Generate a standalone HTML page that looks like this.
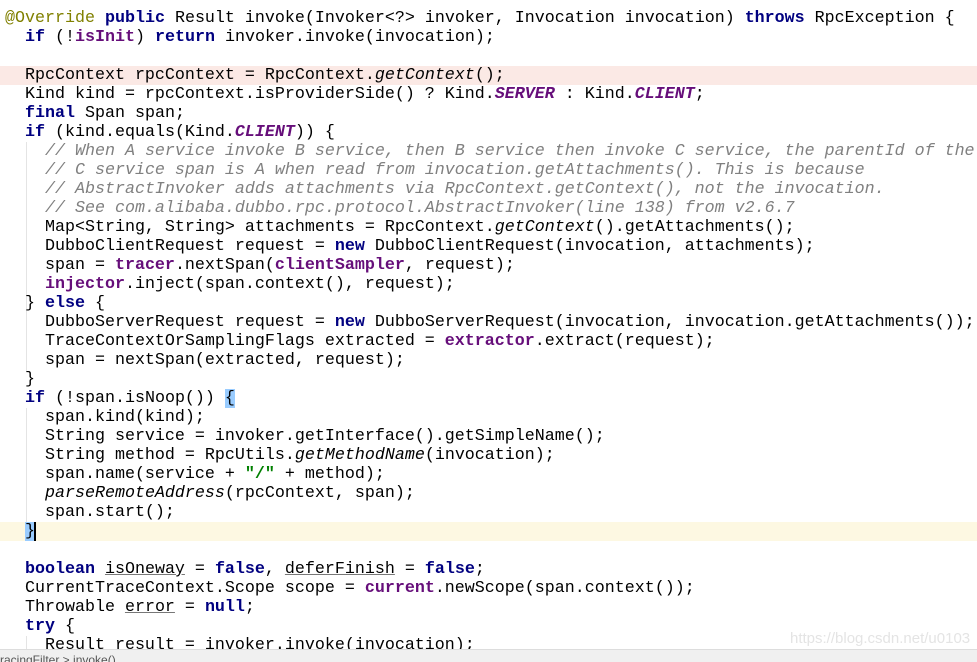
<!DOCTYPE html>
<html><head><meta charset="utf-8"><style>
body{margin:0;width:977px;height:661px;overflow:hidden;background:#fff;position:relative}
#code{position:absolute;left:0;top:9px;font-family:"Liberation Mono",monospace;font-size:16.67px;line-height:19px;color:#000}
.l{height:19px;width:1000px;padding-left:5px;white-space:pre;overflow:hidden}
.k{color:#000080;font-weight:bold}
.f{color:#660e7a;font-weight:bold}
.fi{color:#660e7a;font-style:italic;font-weight:bold}
.i{font-style:italic}
.c{color:#808080;font-style:italic}
.s{color:#008000;font-weight:bold}
.a{color:#808000}
.u{text-decoration:underline;text-decoration-color:#777}
.hl{background:#fbe9e5}
.cur{background:#fdf8e2}
.br{background:#99ccff}
#bar{position:absolute;left:0;top:649px;width:977px;height:12px;background:#f0f0f0;border-top:1px solid #ddd;font-family:"Liberation Sans",sans-serif;font-size:12px;color:#555;line-height:20px;overflow:hidden}
#wm{position:absolute;left:790px;top:630px;font-family:"Liberation Sans",sans-serif;font-size:15px;color:#e4e4e4}
.g{position:absolute;width:1px;background:#e4e4e4}
</style></head><body>
<div class="g" style="left:26px;top:142px;height:229px"></div>
<div class="g" style="left:26px;top:408px;height:115px"></div>
<div class="g" style="left:26px;top:636px;height:14px"></div>
<div id="code"><div class="l"><span class="a">@Override</span> <span class="k">public</span> Result invoke(Invoker&lt;?&gt; invoker, Invocation invocation) <span class="k">throws</span> RpcException {</div><div class="l">  <span class="k">if</span> (!<span class="f">isInit</span>) <span class="k">return</span> invoker.invoke(invocation);</div><div class="l"> </div><div class="l hl">  RpcContext rpcContext = RpcContext.<span class="i">getContext</span>();</div><div class="l">  Kind kind = rpcContext.isProviderSide() ? Kind.<span class="fi">SERVER</span> : Kind.<span class="fi">CLIENT</span>;</div><div class="l">  <span class="k">final</span> Span span;</div><div class="l">  <span class="k">if</span> (kind.equals(Kind.<span class="fi">CLIENT</span>)) {</div><div class="l">    <span class="c">// When A service invoke B service, then B service then invoke C service, the parentId of the</span></div><div class="l">    <span class="c">// C service span is A when read from invocation.getAttachments(). This is because</span></div><div class="l">    <span class="c">// AbstractInvoker adds attachments via RpcContext.getContext(), not the invocation.</span></div><div class="l">    <span class="c">// See com.alibaba.dubbo.rpc.protocol.AbstractInvoker(line 138) from v2.6.7</span></div><div class="l">    Map&lt;String, String&gt; attachments = RpcContext.<span class="i">getContext</span>().getAttachments();</div><div class="l">    DubboClientRequest request = <span class="k">new</span> DubboClientRequest(invocation, attachments);</div><div class="l">    span = <span class="f">tracer</span>.nextSpan(<span class="f">clientSampler</span>, request);</div><div class="l">    <span class="f">injector</span>.inject(span.context(), request);</div><div class="l">  } <span class="k">else</span> {</div><div class="l">    DubboServerRequest request = <span class="k">new</span> DubboServerRequest(invocation, invocation.getAttachments());</div><div class="l">    TraceContextOrSamplingFlags extracted = <span class="f">extractor</span>.extract(request);</div><div class="l">    span = nextSpan(extracted, request);</div><div class="l">  }</div><div class="l">  <span class="k">if</span> (!span.isNoop()) <span class="br">{</span></div><div class="l">    span.kind(kind);</div><div class="l">    String service = invoker.getInterface().getSimpleName();</div><div class="l">    String method = RpcUtils.<span class="i">getMethodName</span>(invocation);</div><div class="l">    span.name(service + <span class="s">"/"</span> + method);</div><div class="l">    <span class="i">parseRemoteAddress</span>(rpcContext, span);</div><div class="l">    span.start();</div><div class="l cur">  <span class="br">}</span><span style="border-left:2px solid #000;margin-left:-1px"></span></div><div class="l"> </div><div class="l">  <span class="k">boolean</span> <span class="u">isOneway</span> = <span class="k">false</span>, <span class="u">deferFinish</span> = <span class="k">false</span>;</div><div class="l">  CurrentTraceContext.Scope scope = <span class="f">current</span>.newScope(span.context());</div><div class="l">  Throwable <span class="u">error</span> = <span class="k">null</span>;</div><div class="l">  <span class="k">try</span> {</div><div class="l">    Result result = invoker.invoke(invocation);</div></div>
<div id="wm">https://blog.csdn.net/u0103</div>
<div id="bar">racingFilter &gt; invoke()</div>
</body></html>
